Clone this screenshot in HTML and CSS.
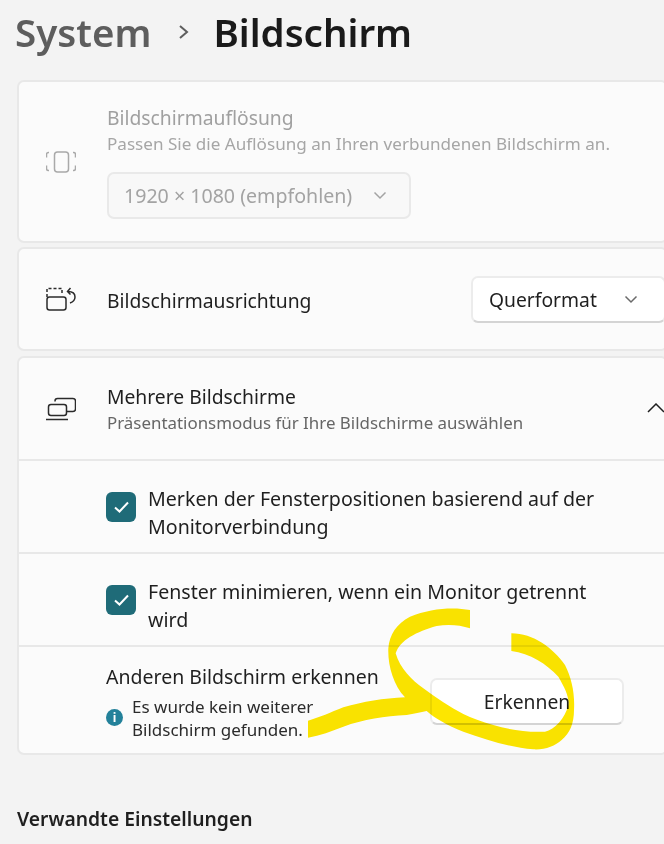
FILE: index.html
```html
<!DOCTYPE html>
<html lang="de">
<head>
  <meta charset="UTF-8">
  <title>System - Bildschirm</title>
  <link rel="stylesheet" href="styles.css">
</head>
<body>

  <h1 class="crumbs">
    <span class="crumb-parent">System</span>
    <svg class="crumb-arrow" width="12" height="18" viewBox="0 0 12 18"><path d="M2 3l7 6-7 6" /></svg>
    <span class="crumb-current">Bildschirm</span>
  </h1>

  <section class="card card-res">
    <svg class="icon" width="30" height="24" viewBox="0 0 30 24">
      <rect x="8.500" y="2" width="14" height="20" rx="3" />
      <path d="M3 2.500h-.5a2 2 0 0 0-2 2v3M.5 15.500v3a2 2 0 0 0 2 2H3M27 2.500h.5a2 2 0 0 1 2 2v3M29.500 15.500v3a2 2 0 0 1-2 2H27" />
    </svg>
    <div>
      <div class="title">Bildschirmauflösung</div>
      <div class="desc">Passen Sie die Auflösung an Ihren verbundenen Bildschirm an.</div>
      <div class="select select-off">
        1920 × 1080 (empfohlen)
        <svg class="chev" width="14" height="9" viewBox="0 0 14 9"><path d="M1.500 1.500L7 7l5.500-5.500" /></svg>
      </div>
    </div>
  </section>

  <section class="card card-orient">
    <svg class="icon icon-on" width="30" height="24" viewBox="0 0 30 24">
      <path class="dashed" d="M1 10V1.500h15V8" />
      <rect x="1" y="10" width="19" height="13" rx="2.500" />
      <path d="M22 4.500c5 0 7 2.500 7 5.500s-2 5-5 6M24.500 1l-3 3.500 3 3" />
    </svg>
    <div class="title title-dark title-low">Bildschirmausrichtung</div>
    <div class="select">
      Querformat
      <svg class="chev" width="14" height="9" viewBox="0 0 14 9"><path d="M1.500 1.500L7 7l5.500-5.500" /></svg>
    </div>
  </section>

  <section class="card card-multi">
    <div class="row row-head">
      <svg class="icon icon-on" width="30" height="24" viewBox="0 0 30 24">
        <path d="M9 4.500V4a2.500 2.500 0 0 1 2.500-2.500h15.500A2.500 2.500 0 0 1 29.500 4v8a2.500 2.500 0 0 1-2.500 2.500h-6" />
        <rect x="2.500" y="7.500" width="18" height="11" rx="2.500" />
        <path d="M0 22.500h22" />
      </svg>
      <div class="head-text">
        <div class="title title-dark">Mehrere Bildschirme</div>
        <div class="desc desc-dark">Präsentationsmodus für Ihre Bildschirme auswählen</div>
      </div>
      <svg class="collapse" width="18" height="10" viewBox="0 0 18 10"><path d="M1 9l8-8 8 8" /></svg>
    </div>

    <div class="row row-check">
      <span class="checkbox"><svg width="17" height="12" viewBox="0 0 16 12"><path d="M1.500 6.500l4.500 4 8.500-9" /></svg></span>
      <div class="check-label">Merken der Fensterpositionen basierend auf der Monitorverbindung</div>
    </div>

    <div class="row row-check">
      <span class="checkbox"><svg width="17" height="12" viewBox="0 0 16 12"><path d="M1.500 6.500l4.500 4 8.500-9" /></svg></span>
      <div class="check-label">Fenster minimieren, wenn ein Monitor getrennt wird</div>
    </div>

    <div class="row row-detect">
      <div class="detect-text">
        <div class="title title-dark title-detect">Anderen Bildschirm erkennen</div>
        <div class="notice">
          <span class="info">i</span>
          <span class="notice-text">Es wurde kein weiterer<br>Bildschirm gefunden.</span>
        </div>
      </div>
      <div class="button">Erkennen</div>
    </div>
  </section>

  <h2 class="related">Verwandte Einstellungen</h2>

  <!-- hand drawn marker over the screenshot -->
  <svg class="marker" width="340" height="180" viewBox="0 0 1020 540">
    <path d="M540 60C490 50 420 55 360 80C320 100 298 135 295 175C293 225 310 285 345 322C280 325 220 335 160 352C120 368 90 382 54 392V443C90 436 125 424 160 410C220 388 285 378 350 375C372 372 392 366 410 363C435 385 470 405 520 425C590 450 660 472 730 478C765 480 795 468 815 450C840 430 852 400 852 360C855 310 845 265 825 225C790 175 730 130 664 130V183C720 190 770 222 805 260C825 295 838 320 835 345C825 385 795 418 765 425C715 428 660 420 610 405C575 395 545 385 520 372C480 352 440 325 400 295C365 270 330 235 317 190C330 150 380 125 440 108C475 102 510 105 540 115Z" />
  </svg>

</body>
</html>
```

FILE: styles.css
```css
html, body {
  height: 844px;
  overflow: hidden;
}

body {
  margin: 0;
  position: relative;
  background: #f3f3f3;
  color: #1b1b1b;
  font-family: 'Noto Sans', 'Open Sans', sans-serif;
  font-size: 19.300px;
}

svg {
  display: block;
  fill: none;
  stroke: currentColor;
  stroke-width: 1.500;
}

.crumbs {
  display: flex;
  align-items: center;
  height: 64px;
  margin: 0 0 16px 15px;
  font-size: 38.500px;
  font-weight: 600;
}

.crumb-parent {
  color: #5d5d5d;
}

.crumb-arrow {
  margin: 0 23px 0 27px;
  color: #5d5d5d;
  stroke-width: 2;
}

.crumb-current {
  color: #1a1a1a;
}

.card {
  display: flex;
  align-items: center;
  margin: 0 -4px 4px 17px;
  background: #fbfbfb;
  border: 2px solid #e8e8e8;
  border-radius: 7px;
  box-sizing: border-box;
}

.card-res {
  height: 163px;
}

.card-orient {
  height: 104px;
  margin-bottom: 5px;
}

.card-multi {
  display: block;
  height: 399px;
}

.icon {
  flex: none;
  margin: 0 31px 0 27px;
  color: #a9a9a9;
}

.icon-on {
  color: #2b2b2b;
}

.dashed {
  stroke-dasharray: 3 2;
}

.title {
  line-height: 26px;
  color: #a0a0a0;
}

.title-dark {
  color: #1f1f1f;
}

.title-low {
  padding-top: 4px;
}

.title-detect {
  font-size: 19.500px;
}

.desc {
  margin-top: 2px;
  font-size: 17.100px;
  line-height: 22px;
  color: #a6a6a6;
}

.desc-dark {
  font-size: 16.900px;
  color: #666;
}

.select {
  display: flex;
  align-items: center;
  justify-content: space-between;
  width: 195px;
  height: 47px;
  margin: 0 0 0 auto;
  padding: 0 26px 0 16px;
  box-sizing: border-box;
  background: #fff;
  border: 2px solid #ececec;
  border-bottom-color: #d4d4d4;
  border-radius: 7px;
  color: #1f1f1f;
}

.select-off {
  width: 304px;
  margin: 17px 0 0;
  padding: 1px 22px 0 15px;
  background: #f8f8f8;
  border-color: #e9e9e9;
  color: #a3a3a3;
  font-size: 19.600px;
}

.chev {
  flex: none;
  color: #6a6a6a;
}

.select-off .chev {
  color: #a3a3a3;
}

.row {
  display: flex;
  align-items: center;
  box-sizing: border-box;
  border-top: 2px solid #e8e8e8;
}

.row-head {
  height: 101px;
  border-top: none;
}

.head-text {
  flex: 1;
}

.collapse {
  margin: 0 1px 0 0;
  color: #1f1f1f;
  position: relative;
  top: -1px;
}

.row-check {
  height: 93px;
  padding-left: 87px;
}

.checkbox {
  flex: none;
  display: flex;
  align-items: center;
  justify-content: center;
  width: 30px;
  height: 30px;
  margin-right: 12px;
  background: #1f6b78;
  border-radius: 6px;
  color: #fff;
}

.checkbox svg {
  stroke-width: 2;
}

.check-label {
  max-width: 470px;
  padding-top: 12px;
  font-size: 19.600px;
  line-height: 28px;
  color: #1f1f1f;
}

.row-detect {
  height: 108px;
  padding-left: 87px;
}

.detect-text {
  flex: 1;
  padding-top: 4px;
}

.notice {
  display: flex;
  align-items: center;
  margin-top: 5px;
}

.info {
  flex: none;
  width: 17px;
  height: 17px;
  margin-right: 9px;
  border-radius: 50%;
  background: #23819a;
  color: #fff;
  font-size: 12px;
  font-weight: 700;
  line-height: 17px;
  text-align: center;
}

.notice-text {
  font-size: 17px;
  line-height: 23px;
  color: #2b2b2b;
}

.button {
  width: 194px;
  height: 47px;
  margin: 3px 42px 0 0;
  background: #fff;
  border: 2px solid #ececec;
  border-bottom-color: #d4d4d4;
  border-radius: 7px;
  box-sizing: border-box;
  line-height: 43px;
  text-align: center;
  color: #1f1f1f;
}

.related {
  margin: 51px 0 0 17px;
  font-size: 19.300px;
  font-weight: 600;
  line-height: 26px;
  color: #1f1f1f;
}

.marker {
  position: absolute;
  left: 290px;
  top: 590px;
  fill: #fde600;
  stroke: none;
  mix-blend-mode: multiply;
}
```
